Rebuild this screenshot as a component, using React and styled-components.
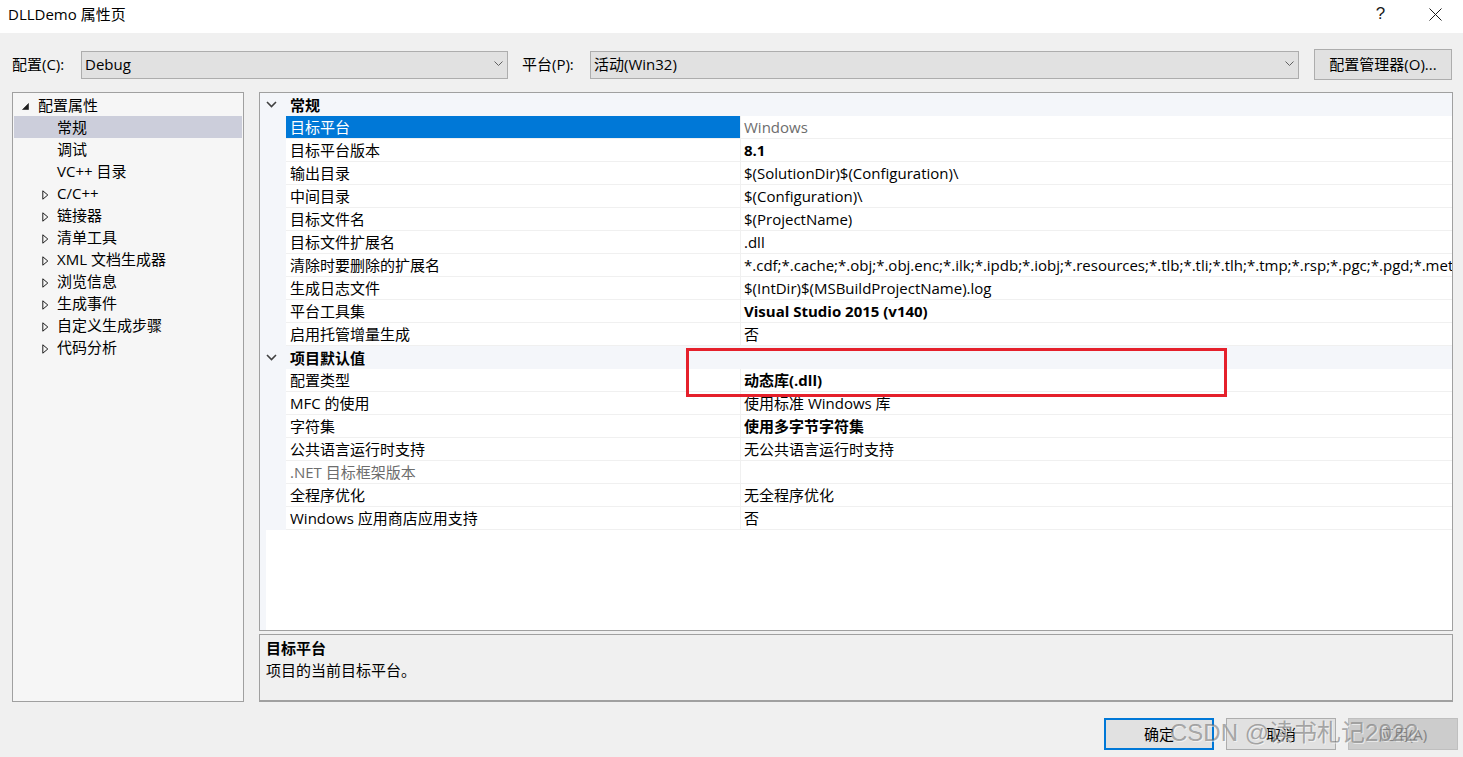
import React from 'react';
import styled, { createGlobalStyle } from 'styled-components';

const GlobalStyle = createGlobalStyle`
  html, body {
    margin: 0;
    padding: 0;
    background: #f0f0f0;
  }
  body {
    font-family: "Open Sans", "Noto Sans CJK SC", sans-serif;
    font-size: 15px;
    color: #000;
  }
`;

const treeItems = [
  { label: '配置属性', level: 0, expander: 'open' },
  { label: '常规', level: 1, selected: true },
  { label: '调试', level: 1 },
  { label: 'VC++ 目录', level: 1 },
  { label: 'C/C++', level: 1, expander: 'closed' },
  { label: '链接器', level: 1, expander: 'closed' },
  { label: '清单工具', level: 1, expander: 'closed' },
  { label: 'XML 文档生成器', level: 1, expander: 'closed' },
  { label: '浏览信息', level: 1, expander: 'closed' },
  { label: '生成事件', level: 1, expander: 'closed' },
  { label: '自定义生成步骤', level: 1, expander: 'closed' },
  { label: '代码分析', level: 1, expander: 'closed' },
];

const sections = [
  {
    title: '常规',
    rows: [
      { name: '目标平台', value: 'Windows', selected: true, muted: true },
      { name: '目标平台版本', value: '8.1', bold: true },
      { name: '输出目录', value: '$(SolutionDir)$(Configuration)\\' },
      { name: '中间目录', value: '$(Configuration)\\' },
      { name: '目标文件名', value: '$(ProjectName)' },
      { name: '目标文件扩展名', value: '.dll' },
      {
        name: '清除时要删除的扩展名',
        value:
          '*.cdf;*.cache;*.obj;*.obj.enc;*.ilk;*.ipdb;*.iobj;*.resources;*.tlb;*.tli;*.tlh;*.tmp;*.rsp;*.pgc;*.pgd;*.meta;*.tlog;*.manifest;*.res;*.pch;*.exp;*.idb;*.rep;*.xdc;*.pdb;*_manifest.rc;*.bsc;*.sbr;*.xml;*.metagen;*.bi',
      },
      { name: '生成日志文件', value: '$(IntDir)$(MSBuildProjectName).log' },
      { name: '平台工具集', value: 'Visual Studio 2015 (v140)', bold: true },
      { name: '启用托管增量生成', value: '否' },
    ],
  },
  {
    title: '项目默认值',
    rows: [
      { name: '配置类型', value: '动态库(.dll)', bold: true },
      { name: 'MFC 的使用', value: '使用标准 Windows 库' },
      { name: '字符集', value: '使用多字节字符集', bold: true },
      { name: '公共语言运行时支持', value: '无公共语言运行时支持' },
      { name: '.NET 目标框架版本', value: '', disabled: true },
      { name: '全程序优化', value: '无全程序优化' },
      { name: 'Windows 应用商店应用支持', value: '否' },
    ],
  },
];

const ExpandedIcon = () => (
  <svg width="7" height="7" viewBox="0 0 7 7">
    <path d="M6.5 0.5 L6.5 6.5 L0.5 6.5 Z" fill="#1e1e1e" stroke="#1e1e1e" strokeWidth="0.6" />
  </svg>
);

const CollapsedIcon = () => (
  <svg width="7" height="10" viewBox="0 0 7 10">
    <path d="M0.8 0.8 L5.8 5 L0.8 9.2 Z" fill="none" stroke="#1e1e1e" strokeWidth="1" />
  </svg>
);

const ComboChevron = () => (
  <svg width="9" height="5" viewBox="0 0 9 5">
    <path d="M0.5 0.5 L4.5 4.5 L8.5 0.5" fill="none" stroke="#606060" strokeWidth="1" />
  </svg>
);

const SectionChevron = () => (
  <svg width="11" height="7" viewBox="0 0 11 7">
    <path d="M1 1 L5.5 5.5 L10 1" fill="none" stroke="#404040" strokeWidth="1.6" />
  </svg>
);

const CloseGlyph = () => (
  <svg width="13" height="13" viewBox="0 0 13 13">
    <path d="M0.5 0.5 L12.5 12.5 M12.5 0.5 L0.5 12.5" stroke="#1a1a1a" strokeWidth="1" />
  </svg>
);

const App = () => {
  return (
    <Window>
      <GlobalStyle />
      <TitleBar>
        <TitleText>DLLDemo 属性页</TitleText>
        <CaptionButton>?</CaptionButton>
        <CaptionButton>
          <CloseGlyph />
        </CaptionButton>
      </TitleBar>

      <Body>
        <Toolbar>
          <FieldLabel width={69}>配置(C):</FieldLabel>
          <Combo width={427}>
            <span>Debug</span>
            <ComboChevron />
          </Combo>
          <FieldLabel width={68} gap={14}>平台(P):</FieldLabel>
          <Combo width={709}>
            <span>活动(Win32)</span>
            <ComboChevron />
          </Combo>
          <ManagerButton>配置管理器(O)...</ManagerButton>
        </Toolbar>

        <Main>
          <TreePanel>
            {treeItems.map((item) => (
              <TreeRow key={item.label} level={item.level} selected={item.selected}>
                <ExpanderSlot level={item.level}>
                  {item.expander === 'open' && <ExpandedIcon />}
                  {item.expander === 'closed' && <CollapsedIcon />}
                </ExpanderSlot>
                {item.label}
              </TreeRow>
            ))}
          </TreePanel>

          <RightColumn>
            <GridPanel>
              {sections.map((section) => (
                <React.Fragment key={section.title}>
                  <SectionRow>
                    <Gutter>
                      <SectionChevron />
                    </Gutter>
                    <SectionTitle>{section.title}</SectionTitle>
                  </SectionRow>
                  {section.rows.map((row) => (
                    <PropRow key={row.name}>
                      <Gutter />
                      <NameCell selected={row.selected} disabled={row.disabled}>
                        {row.name}
                      </NameCell>
                      <ValueCell bold={row.bold} muted={row.muted}>
                        {row.value}
                      </ValueCell>
                    </PropRow>
                  ))}
                </React.Fragment>
              ))}
              <GridFiller>
                <Gutter />
              </GridFiller>
            </GridPanel>

            <DescPanel>
              <DescTitle>目标平台</DescTitle>
              <DescText>项目的当前目标平台。</DescText>
            </DescPanel>
          </RightColumn>
        </Main>
      </Body>

      <Footer>
        <DialogButton primary>确定</DialogButton>
        <DialogButton>取消</DialogButton>
        <DialogButton disabled>应用(A)</DialogButton>
      </Footer>

      <Highlight />
      <Watermark>CSDN @读书札记2022</Watermark>
    </Window>
  );
};

export default App;

const Window = styled.div`
  position: relative;
  width: 1463px;
  height: 757px;
  background: #f0f0f0;
  display: flex;
  flex-direction: column;
  overflow: hidden;
`;

const TitleBar = styled.div`
  height: 33px;
  background: #fff;
  display: flex;
  align-items: center;
  padding-left: 8px;
  flex-shrink: 0;
`;

const TitleText = styled.div`
  flex: 1;
  line-height: 20px;
  padding-bottom: 5px;
`;

const CaptionButton = styled.div`
  width: 55px;
  height: 33px;
  display: flex;
  align-items: center;
  justify-content: center;
  padding-bottom: 5px;
  box-sizing: border-box;
  font-family: "Liberation Sans", sans-serif;
  font-size: 17px;
  color: #1a1a1a;
`;

const Body = styled.div`
  padding: 16px 10px 0 12px;
  display: flex;
  flex-direction: column;
`;

const Toolbar = styled.div`
  display: flex;
  align-items: center;
  height: 31px;
`;

const FieldLabel = styled.div`
  width: ${(p) => p.width}px;
  margin-left: ${(p) => p.gap || 0}px;
  line-height: 20px;
  padding-bottom: 2px;
  white-space: nowrap;
`;

const Combo = styled.div`
  width: ${(p) => p.width}px;
  height: 28px;
  box-sizing: border-box;
  border: 1px solid #adadad;
  background: #e1e1e1;
  display: flex;
  align-items: center;
  justify-content: space-between;
  padding: 0 4px 2px 3px;
  line-height: 20px;
`;

const ManagerButton = styled.div`
  width: 138px;
  height: 31px;
  margin-left: 15px;
  box-sizing: border-box;
  border: 1px solid #adadad;
  background: #e1e1e1;
  display: flex;
  align-items: center;
  justify-content: center;
  padding-bottom: 2px;
  line-height: 20px;
`;

const Main = styled.div`
  margin-top: 12px;
  height: 610px;
  display: flex;
  gap: 15px;
`;

const TreePanel = styled.div`
  width: 232px;
  box-sizing: border-box;
  border: 1px solid #a0a0a0;
  background: #f6f6f6;
  padding: 1px;
`;

const TreeRow = styled.div`
  height: 22px;
  display: flex;
  align-items: center;
  padding-left: ${(p) => 6 + p.level * 19}px;
  background: ${(p) => (p.selected ? '#cccedb' : 'transparent')};
  line-height: 20px;
  white-space: nowrap;
`;

const ExpanderSlot = styled.div`
  width: 18px;
  height: 22px;
  display: flex;
  align-items: center;
  padding-left: ${(p) => (p.level === 0 ? 2 : 3)}px;
  padding-top: 3px;
  box-sizing: border-box;
`;

const RightColumn = styled.div`
  flex: 1;
  display: flex;
  flex-direction: column;
  gap: 3px;
`;

const GridPanel = styled.div`
  height: 539px;
  box-sizing: border-box;
  border: 1px solid #a0a0a0;
  background: #fff;
  display: flex;
  flex-direction: column;
  overflow: hidden;
`;

const SectionRow = styled.div`
  height: 23px;
  flex-shrink: 0;
  display: grid;
  grid-template-columns: 26px 1fr;
  background: #f4f6fa;
`;

const Gutter = styled.div`
  background: #f4f6fa;
  display: flex;
  align-items: center;
  padding-left: 6px;
`;

const SectionTitle = styled.div`
  display: flex;
  align-items: center;
  padding-left: 4px;
  font-weight: 700;
  line-height: 20px;
`;

const PropRow = styled.div`
  height: 23px;
  flex-shrink: 0;
  display: grid;
  grid-template-columns: 26px 455px 1fr;
`;

const NameCell = styled.div`
  display: flex;
  align-items: center;
  padding-left: 4px;
  box-sizing: border-box;
  border-right: 1px solid #f0f0f0;
  border-bottom: 1px solid #f0f0f0;
  background: ${(p) => (p.selected ? '#0078d7' : '#fff')};
  color: ${(p) => (p.selected ? '#fff' : p.disabled ? '#6d6d6d' : '#000')};
  line-height: 20px;
  white-space: nowrap;
`;

const ValueCell = styled.div`
  display: flex;
  align-items: center;
  padding-left: 3px;
  box-sizing: border-box;
  border-bottom: 1px solid #f0f0f0;
  font-weight: ${(p) => (p.bold ? 700 : 400)};
  color: ${(p) => (p.muted ? '#6d6d6d' : '#000')};
  line-height: 20px;
  white-space: nowrap;
  overflow: hidden;
`;

const GridFiller = styled.div`
  flex: 1;
  display: flex;
`;

const DescPanel = styled.div`
  flex: 1;
  box-sizing: border-box;
  border: 1px solid #a0a0a0;
  border-bottom: 2px solid #a0a0a0;
  background: #f0f0f0;
  padding: 3px 6px;
`;

const DescTitle = styled.div`
  font-weight: 700;
  line-height: 21px;
`;

const DescText = styled.div`
  line-height: 22px;
`;

const Footer = styled.div`
  display: flex;
  justify-content: flex-end;
  gap: 12px;
  padding: 16px 5px 0 0;
`;

const DialogButton = styled.div`
  width: 110px;
  height: 32px;
  box-sizing: border-box;
  display: flex;
  align-items: center;
  justify-content: center;
  line-height: 20px;
  background: ${(p) => (p.disabled ? '#cccccc' : '#e1e1e1')};
  border: ${(p) => (p.primary ? '2px solid #0078d7' : p.disabled ? '1px solid #bfbfbf' : '1px solid #adadad')};
  color: ${(p) => (p.disabled ? '#838383' : '#000')};
`;

const Highlight = styled.div`
  position: absolute;
  left: 686px;
  top: 348px;
  width: 541px;
  height: 49px;
  box-sizing: border-box;
  border: 3px solid #e5202b;
  pointer-events: none;
`;

const Watermark = styled.div`
  position: absolute;
  left: 1170px;
  top: 717px;
  font-family: "Liberation Sans", "Noto Sans CJK SC", sans-serif;
  font-size: 24px;
  line-height: 32px;
  color: rgba(105, 105, 105, 0.55);
  text-shadow: 1px 1px 0 rgba(255, 255, 255, 0.55);
  white-space: nowrap;
  pointer-events: none;
`;
